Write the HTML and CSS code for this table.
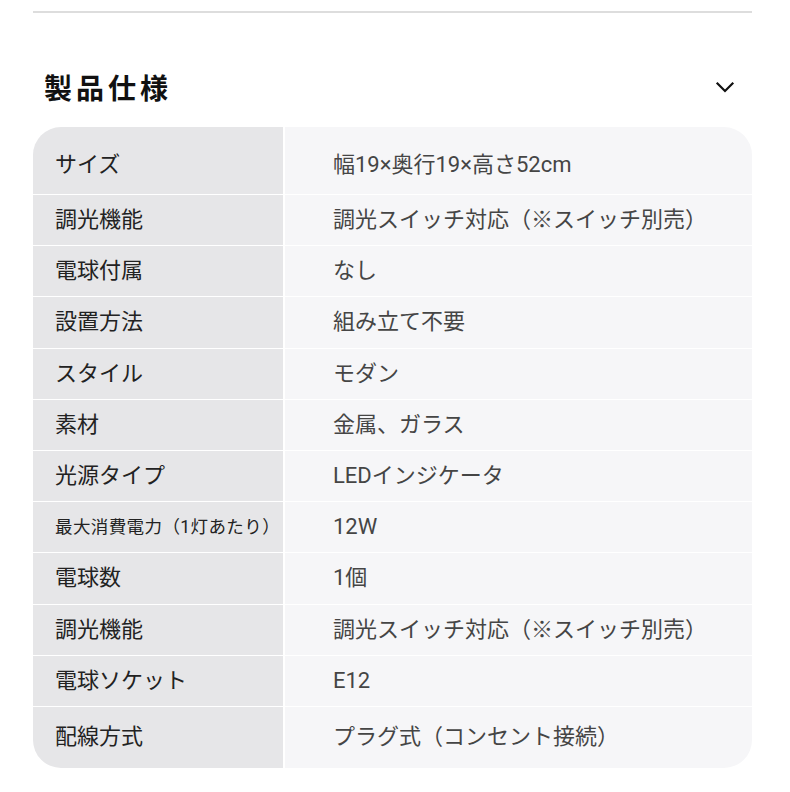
FILE: index.html
```html
<!DOCTYPE html>
<html lang="ja">
<head>
<meta charset="utf-8">
<title>製品仕様</title>
<link rel="stylesheet" href="styles.css">
</head>
<body>
<div class="page">
  <div class="rule"></div>
  <div class="header">
    <h2 class="title">製品仕様</h2>
    <span class="chevron">
      <svg width="24" height="24" viewBox="0 0 24 24"><path d="M4.5 8.5 L12 16 L19.5 8.5" fill="none" stroke="#111" stroke-width="2.2" stroke-linecap="square" stroke-linejoin="miter"/></svg>
    </span>
  </div>
  <div class="spec">
    <div class="label first">サイズ</div><div class="value first">幅19×奥行19×高さ52cm</div>
    <div class="label">調光機能</div><div class="value">調光スイッチ対応（※スイッチ別売）</div>
    <div class="label">電球付属</div><div class="value">なし</div>
    <div class="label">設置方法</div><div class="value">組み立て不要</div>
    <div class="label">スタイル</div><div class="value">モダン</div>
    <div class="label">素材</div><div class="value">金属、ガラス</div>
    <div class="label">光源タイプ</div><div class="value">LEDインジケータ</div>
    <div class="label small">最大消費電力（1灯あたり）</div><div class="value">12W</div>
    <div class="label">電球数</div><div class="value">1個</div>
    <div class="label">調光機能</div><div class="value">調光スイッチ対応（※スイッチ別売）</div>
    <div class="label">電球ソケット</div><div class="value">E12</div>
    <div class="label last">配線方式</div><div class="value last">プラグ式（コンセント接続）</div>
  </div>
</div>
</body>
</html>
```
FILE: styles.css
```css
html, body {
  margin: 0;
  padding: 0;
  background: #ffffff;
}
body {
  font-family: Roboto, "Noto Sans CJK JP", "Noto Sans", sans-serif;
  color: #222;
}
.page {
  padding: 11px 38px 0 33px;
}
.rule {
  height: 2px;
  background: #dddddd;
}
.header {
  display: flex;
  align-items: center;
  justify-content: space-between;
  margin-top: 54px;
  height: 40px;
}
.title {
  margin: 0 0 0 11px;
  font-family: "Noto Sans CJK JP", sans-serif;
  font-size: 28px;
  line-height: 40px;
  font-weight: 700;
  letter-spacing: 4px;
  color: #111;
}
.chevron {
  display: flex;
  width: 24px;
  height: 24px;
  margin-right: 15px;
}
.spec {
  margin-top: 20px;
  display: grid;
  grid-template-columns: 250px 1fr;
  grid-template-rows: 67px repeat(10, 50.2px) 61px;
  column-gap: 2px;
  row-gap: 1px;
  background: #ffffff;
  border-radius: 28px;
  overflow: hidden;
}
.label, .value {
  display: flex;
  align-items: center;
  box-sizing: border-box;
  font-size: 22px;
  line-height: 30px;
  font-weight: 400;
}
.label {
  background: #e6e6e8;
  padding-left: 22px;
  color: #222;
}
.value {
  background: #f6f6f8;
  padding-left: 48px;
  color: #454545;
}
.label.small {
  font-size: 17.5px;
  letter-spacing: 0.4px;
}
.first {
  padding-top: 13px;
  padding-bottom: 3.8px;
}
.last {
  padding-top: 5.4px;
  padding-bottom: 5.4px;
}
```
